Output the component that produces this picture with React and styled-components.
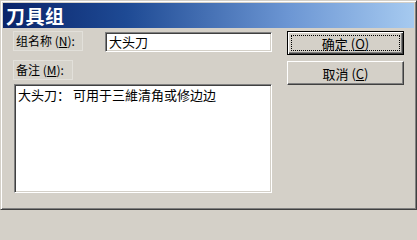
import React from "react";
import styled, { createGlobalStyle } from "styled-components";

const Global = createGlobalStyle`
  html, body { margin: 0; padding: 0; background: #d4d0c8; }
  * { box-sizing: border-box; }
`;

const Window = styled.div`
  width: 417px;
  height: 210px;
  background: #d4d0c8;
  border: 1px solid;
  border-color: #d4d0c8 #404040 #404040 #d4d0c8;
  box-shadow: inset 1px 1px #ffffff, inset -1px -1px #808080;
  padding: 2px;
  display: flex;
  flex-direction: column;
  font-family: "Noto Sans CJK SC", "Noto Sans", sans-serif;
  color: #000;
`;

const TitleBar = styled.div`
  height: 25px;
  background: linear-gradient(to right, #0a246a 0%, #1e4a94 30%, #6d97d4 70%, #a6caf0 100%);
  color: #fff;
  font-weight: 700;
  font-size: 19px;
  line-height: 25px;
  padding-left: 3px;
  letter-spacing: 0.5px;
`;

const Body = styled.div`
  flex: 1;
  display: flex;
  gap: 15px;
  padding: 3px 10px 0 10px;
`;

const LeftCol = styled.div`
  width: 259px;
  display: flex;
  flex-direction: column;
`;

const Row = styled.div`
  display: flex;
  align-items: flex-start;
  justify-content: space-between;
`;

const Label = styled.div`
  width: ${(p) => p.$w}px;
  height: 20px;
  margin-top: ${(p) => p.$mt || 0}px;
  font-size: 12px;
  line-height: 18px;
  padding-left: 2px;
  background: #d6d3cb;
  border: 1px solid #e2e0da;
  white-space: nowrap;
  u { text-decoration: underline; }
`;

const sunken = `
  border: 1px solid;
  border-color: #808080 #ffffff #ffffff #808080;
  box-shadow: inset 1px 1px #404040, inset -1px -1px #d4d0c8;
  background: #fff;
`;

const Input = styled.div`
  ${sunken}
  width: 167px;
  height: 20px;
  margin-top: 1px;
  font-size: 13px;
  line-height: 18px;
  padding-left: 3px;
`;

const TextArea = styled.div`
  ${sunken}
  margin-top: 4px;
  margin-left: 1px;
  width: 258px;
  height: 109px;
  font-size: 13px;
  line-height: 18px;
  padding: 1px 3px;
  white-space: pre;
`;

const RightCol = styled.div`
  display: flex;
  flex-direction: column;
  gap: 6px;
`;

const Button = styled.div`
  width: 117px;
  height: 24px;
  display: flex;
  align-items: center;
  justify-content: center;
  font-size: 13px;
  white-space: pre;
  background: #d4d0c8;
  border: 1px solid;
  border-color: ${(p) => (p.$default ? "#000" : "#fff #404040 #404040 #fff")};
  box-shadow: ${(p) =>
    p.$default
      ? "inset 1px 1px #fff, inset -1px -1px #404040, inset -2px -2px #808080"
      : "inset -1px -1px #808080"};
  position: relative;
  u { text-decoration: underline; }
`;

const Focus = styled.span`
  position: absolute;
  inset: 3px;
  border: 1px dotted #000;
`;

export default function App() {
  return (
    <>
      <Global />
      <Window>
        <TitleBar>刀具组</TitleBar>
        <Body>
          <LeftCol>
            <Row>
              <Label $w={70}>组名称 (<u>N</u>):</Label>
              <Input>大头刀</Input>
            </Row>
            <Label $w={60} $mt={8}>备注 (<u>M</u>):</Label>
            <TextArea>大头刀： 可用于三維清角或修边边</TextArea>
          </LeftCol>
          <RightCol>
            <Button $default>
              <Focus />
              确定 (<u>O</u>)
            </Button>
            <Button>取消 (<u>C</u>)</Button>
          </RightCol>
        </Body>
      </Window>
    </>
  );
}
